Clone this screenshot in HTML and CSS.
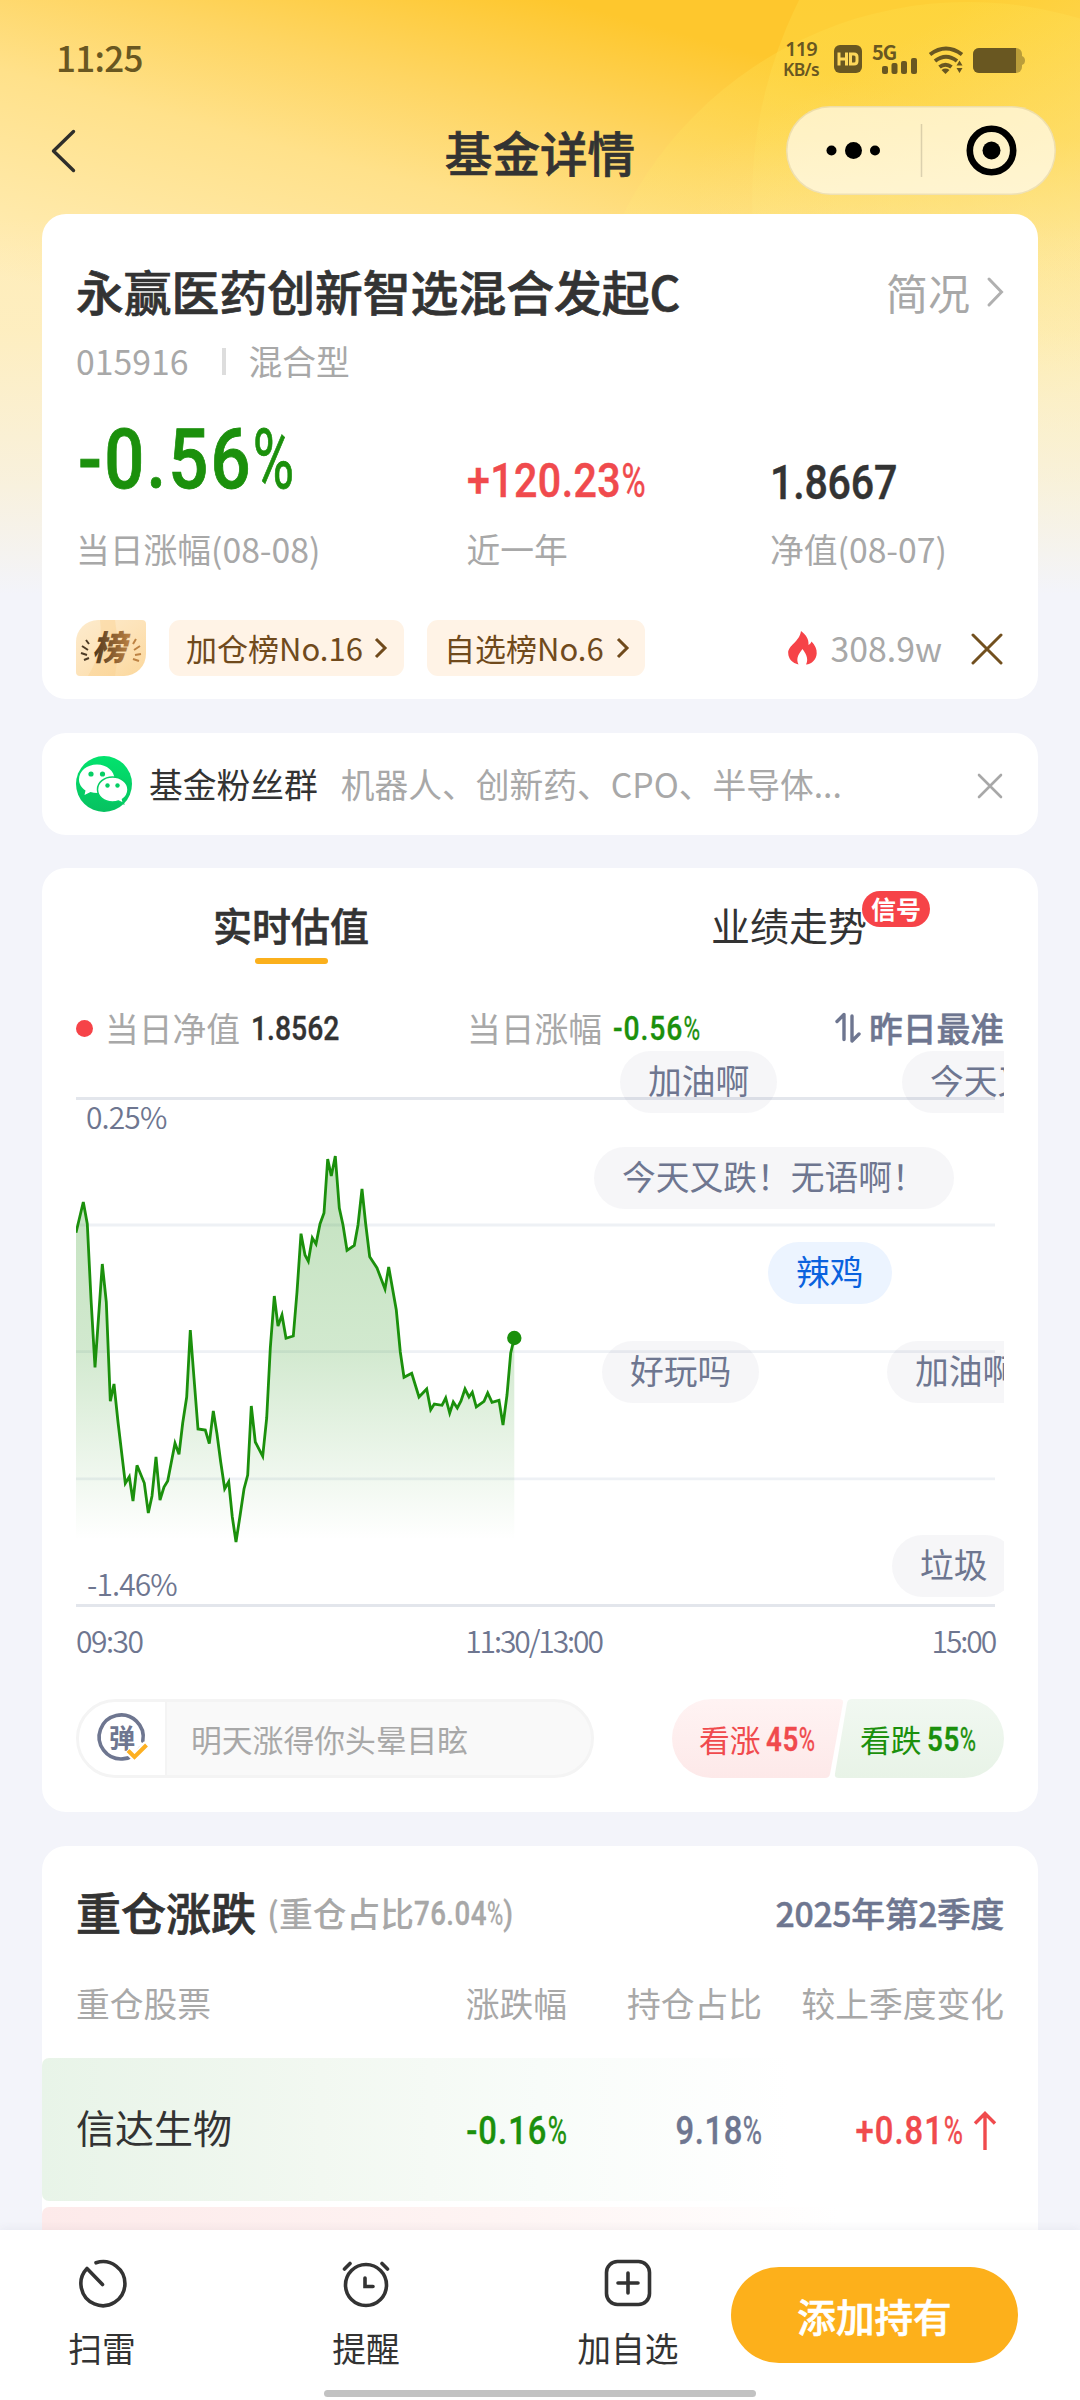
FILE: index.html
```html
<!DOCTYPE html>
<html lang="zh-CN">
<head>
<meta charset="utf-8">
<title>基金详情</title>
<link rel="stylesheet" href="styles.css">
</head>
<body>
<div class="page">
  <svg class="backdrop" width="1080" height="600" viewBox="0 0 1080 600">
    <defs>
      <linearGradient id="sky" gradientUnits="userSpaceOnUse" x1="560" y1="0" x2="450" y2="400">
        <stop offset="0" stop-color="#fec72d"/><stop offset=".28" stop-color="#fed562"/><stop offset=".52" stop-color="#ffe18a"/><stop offset="1" stop-color="#ffedb8"/>
      </linearGradient>
      <linearGradient id="haze" x1="0" y1="0" x2="0" y2="1">
        <stop offset=".36" stop-color="#f3f4fa" stop-opacity="0"/><stop offset=".55" stop-color="#f3f4fa" stop-opacity=".12"/><stop offset=".8" stop-color="#f3f4fa" stop-opacity=".55"/><stop offset=".99" stop-color="#f3f4fa" stop-opacity="1"/>
      </linearGradient>
      <linearGradient id="side" gradientUnits="userSpaceOnUse" x1="0" y1="0" x2="0" y2="400">
        <stop offset="0" stop-color="#ffe04a" stop-opacity=".32"/><stop offset=".35" stop-color="#ffe25e" stop-opacity=".3"/><stop offset=".6" stop-color="#ffe88c" stop-opacity=".3"/><stop offset="1" stop-color="#ffedb0" stop-opacity=".3"/>
      </linearGradient>
      <linearGradient id="corner" gradientUnits="userSpaceOnUse" x1="830" y1="80" x2="1020" y2="420">
        <stop offset="0" stop-color="#ffe99c" stop-opacity="0"/><stop offset="1" stop-color="#ffefb4" stop-opacity=".75"/>
      </linearGradient>
    </defs>
    <rect width="1080" height="600" fill="url(#sky)"/>
    <circle cx="968" cy="388" r="386" fill="url(#side)"/>
    <circle cx="1200" cy="200" r="448" fill="url(#side)"/>
    <path d="M700 0h380v600H700z" fill="url(#corner)"/>
    <rect width="1080" height="600" fill="url(#haze)"/>
  </svg>

  <header class="status">
    <span class="clock">11:25</span>
    <span class="speed"><b>119</b><i>KB/s</i></span>
    <svg class="status-icons" width="192" height="32" viewBox="833 43 192 32">
      <g fill="#695721">
        <rect x="834" y="45" width="28" height="28" rx="6"/>
        <g fill="none" stroke="#fdd75a" stroke-width="3"><path d="M839 52.500v13M846.500 52.500v13M839 59h7.500M850.500 54h3.500q3 0 3 3v4q0 3-3 3h-3.500z"/></g>
        <text x="872" y="59.500" class="five-g">5G</text>
        <rect x="882" y="66" width="6" height="8" rx="2"/><rect x="891.500" y="63" width="6" height="11" rx="2"/><rect x="901" y="61" width="6" height="13" rx="2"/><rect x="911" y="58" width="6" height="16" rx="2"/>
        <g fill="none" stroke="#695721" stroke-width="4"><path d="M930 54.500q16-12 32 0M935 61q11-8.500 22 0M939.500 67q6-4.500 12 0"/></g>
        <path d="M941.500 70q4-2.800 8 0l-4 4zM956.500 65.500l3-5 3 5zM956.500 68l3 5 3-5z"/>
        <rect x="973" y="48" width="49" height="25" rx="6" fill-opacity=".45"/><path d="M979 48h37v25h-37a6 6 0 0 1-6-6V54a6 6 0 0 1 6-6z"/><path d="M1022 56q3 1 3 4.500t-3 4.500z" fill-opacity=".45"/>
      </g>
    </svg>
  </header>

  <nav class="nav">
    <svg class="back" width="30" height="46" viewBox="0 0 30 46"><path d="M25.500 3.500 5.500 23l20 19.500" fill="none" stroke="#2f2e2a" stroke-width="3.400" stroke-linecap="round" stroke-linejoin="round"/></svg>
    <h1>基金详情</h1>
    <div class="capsule">
      <svg width="270" height="89" viewBox="0 0 270 89"><circle cx="45.500" cy="44.500" r="5"/><circle cx="67.500" cy="44.500" r="8.500"/><circle cx="89" cy="44.500" r="5"/><path d="M135.500 18v53" stroke="#000" stroke-opacity=".14" stroke-width="1.500"/><circle cx="205.500" cy="44.500" r="21.700" fill="none" stroke="#000" stroke-width="6.600"/><circle cx="205.500" cy="44.500" r="9"/></svg>
    </div>
  </nav>

  <main>
    <section class="card fund">
      <div class="name-row">
        <h2>永赢医药创新智选混合发起C</h2>
        <a class="brief">简况<svg width="20" height="32" viewBox="0 0 20 32"><path d="M5 3 17.500 16 5 29" fill="none" stroke="#b0b0b0" stroke-width="3" stroke-linecap="round"/></svg></a>
      </div>
      <div class="code-row"><span>015916</span><i></i><span>混合型</span></div>
      <div class="figures">
        <div><div class="value green"><span class="num big">-0.56<s>%</s></span></div><div class="label">当日涨幅(08-08)</div></div>
        <div><div class="value red"><span class="num mid">+120.23<s>%</s></span></div><div class="label">近一年</div></div>
        <div><div class="value"><span class="num mid low">1.8667</span></div><div class="label">净值(08-07)</div></div>
      </div>
      <div class="rank-row">
        <svg class="rank-badge" width="70" height="56" viewBox="0 0 70 56">
          <defs>
            <linearGradient id="gold" x1="0" y1="0" x2="1" y2="1"><stop offset="0" stop-color="#fdebcd"/><stop offset=".5" stop-color="#fde3b9"/><stop offset="1" stop-color="#fbd79b"/></linearGradient>
            <linearGradient id="ink" x1="0" y1="0" x2="1" y2="0"><stop offset="0" stop-color="#4c351c"/><stop offset="1" stop-color="#bd8243"/></linearGradient>
          </defs>
          <path d="M22 0h44a4 4 0 0 1 4 4v30a22 22 0 0 1-22 22H4a4 4 0 0 1-4-4V22A22 22 0 0 1 22 0z" fill="url(#gold)"/>
          <path d="M24 0h15q5 28 0 56H12Q28 30 24 0z" fill="#f9cf8c" fill-opacity=".4"/>
          <g fill="none" stroke="#4c3a25" stroke-width="2"><path d="M10 20l3 4M6 26l6 4M5 33l6 2M8 40l5-2"/></g>
          <g fill="none" stroke="#bd8243" stroke-width="2"><path d="M60 19l-3 5M64 26l-6 4M65 34l-6 1M63 41l-6-2"/></g>
          <text x="16" y="39.500" class="rank-char" fill="url(#ink)">榜</text>
        </svg>
        <a class="chip first">加仓榜No.16<svg width="14" height="22" viewBox="0 0 14 22"><path d="M2 2l9 9-9 9" fill="none" stroke="#704a1c" stroke-width="3"/></svg></a>
        <a class="chip second">自选榜No.6<svg width="14" height="22" viewBox="0 0 14 22"><path d="M2 2l9 9-9 9" fill="none" stroke="#704a1c" stroke-width="3"/></svg></a>
        <span class="heat"><svg width="29" height="34" viewBox="0 0 29 34"><path d="M13 0c5 4 8 8 7.500 14 1.500-.8 2.500-2 3-3.500C27 14 29 18 28.700 22.500 28.300 28.500 24 33 18 33.500c2.500-4.500 1-9.500-3.500-15.500C11 22.500 7.500 27 10.500 33.500 4.500 32 .3 28 .2 22 .2 14 11.500 11 13 0z" fill="#f64348"/></svg>308.9w</span>
        <svg class="close-brown" width="32" height="32" viewBox="0 0 32 32"><path d="M2 2l28 28M30 2 2 30" stroke="#72501f" stroke-width="3" stroke-linecap="round"/></svg>
      </div>
    </section>

    <section class="card fans">
      <svg width="56" height="56" viewBox="0 0 56 56">
        <defs><linearGradient id="wx" x1="0" y1="0" x2="0" y2="1"><stop offset="0" stop-color="#02e36d"/><stop offset="1" stop-color="#07c160"/></linearGradient></defs>
        <circle cx="28" cy="28" r="28" fill="url(#wx)"/>
        <path d="M21 8.500C11 8.500 3 15 3 23.500c0 4.500 2.500 8.500 6.500 11L8.500 39l6-3q3 1 7 1c10 0 17-6.500 17-14S31 8.500 21 8.500z" fill="#fff"/>
        <path d="M36.500 21C28 21 21.500 26.500 21.500 33.500S28 46 36.500 46q3.300 0 6-1l5 2.500-1-4.200c3.500-2.300 5.500-5.800 5.500-9.800C52 26.500 45 21 36.500 21z" fill="#fff" stroke="#05cf64" stroke-width="1.500"/>
        <g fill="#05cf64"><circle cx="15" cy="18" r="2.600"/><circle cx="26.500" cy="18" r="2.600"/><circle cx="31.500" cy="29.500" r="2.200"/><circle cx="41.500" cy="29.500" r="2.200"/></g>
      </svg>
      <strong>基金粉丝群</strong>
      <span>机器人、创新药、CPO、半导体...</span>
      <svg class="close" width="28" height="28" viewBox="0 0 28 28"><path d="M3 3l22 22M25 3 3 25" stroke="#a8a8a8" stroke-width="2.600" stroke-linecap="round"/></svg>
    </section>

    <section class="card trend">
      <div class="tabs">
        <a class="tab active"><span>实时估值</span></a>
        <a class="tab"><span>业绩走势<em>信号</em></span></a>
      </div>
      <div class="legend">
        <div><i class="dot"></i>当日净值<span class="num small">1.8562</span></div>
        <div>当日涨幅<span class="num small pct green">-0.56<s>%</s></span></div>
        <div class="best"><svg width="26" height="32" viewBox="0 0 26 32"><path d="M2 9.500 9 2.500v25M17 4v25l7-7" fill="none" stroke="#6e7690" stroke-width="3.400" stroke-linecap="round" stroke-linejoin="round"/></svg>昨日最准</div>
      </div>
      <div class="chart">
        <svg width="928" height="559" viewBox="0 0 928 559">
          <defs><linearGradient id="fill" gradientUnits="userSpaceOnUse" x1="0" y1="105" x2="0" y2="489"><stop offset="0" stop-color="#1b900c" stop-opacity=".27"/><stop offset=".5" stop-color="#1b900c" stop-opacity=".2"/><stop offset="1" stop-color="#1b900c" stop-opacity="0"/></linearGradient></defs>
          <g stroke="#eef1f5" stroke-width="2.800"><path d="M0 174h919M0 300.600h919M0 427.800h919"/></g>
          <g stroke="#e3e6ec" stroke-width="3"><path d="M0 47.500h919M0 554.500h919"/></g>
          <path fill="url(#fill)" d="M0 181.700 7.300 151 11.300 173 15 248 19 316.300 26.300 213 30.300 251 34.300 350.300 38 333 42 371 49.300 432.300 53.300 425.700 57 450 61 414.300 68.300 432 72.300 462 76 445 80 406 84 449 88 436 91.700 430 99 392.300 103 403.300 106.700 372 110.700 346 114.300 279 118 327 122 378 129.300 379 133.300 392.700 137.300 360 141 383 144.700 411 148.700 437.700 152.700 430.700 156.300 466 160 491 164 465 168 438 171.700 424 175.300 355 179.300 391 186.700 405.300 190.700 367 194.300 297 198.300 245 202 275 206 264 210 287.300 217.300 285 221 241 225 182.700 229 204 232.300 210.300 236.300 187 240 193 244 173 248 162 251.700 108 255.300 125 259.300 105 263.300 157 267 174 271 199.300 278.300 194.300 282 174 286 138 289.700 173 293.700 205.700 301 217 309 238 312.700 216 320.300 259 324.300 301 328 326.300 335.700 322.300 343 346 350.700 338 354.700 358.700 358.300 353 366 354.300 369.700 347 373.700 362 377.300 351 381.300 357 385 350 389 338 393 346 396.300 341.300 400.300 356 408 350.300 411.700 342 416 351.300 423 349.300 427 374 431 344 434.700 302 438.300 287V489H0z"/>
          <path fill="none" stroke="#1b900c" stroke-width="2.800" d="M0 181.700 7.300 151 11.300 173 15 248 19 316.300 26.300 213 30.300 251 34.300 350.300 38 333 42 371 49.300 432.300 53.300 425.700 57 450 61 414.300 68.300 432 72.300 462 76 445 80 406 84 449 88 436 91.700 430 99 392.300 103 403.300 106.700 372 110.700 346 114.300 279 118 327 122 378 129.300 379 133.300 392.700 137.300 360 141 383 144.700 411 148.700 437.700 152.700 430.700 156.300 466 160 491 164 465 168 438 171.700 424 175.300 355 179.300 391 186.700 405.300 190.700 367 194.300 297 198.300 245 202 275 206 264 210 287.300 217.300 285 221 241 225 182.700 229 204 232.300 210.300 236.300 187 240 193 244 173 248 162 251.700 108 255.300 125 259.300 105 263.300 157 267 174 271 199.300 278.300 194.300 282 174 286 138 289.700 173 293.700 205.700 301 217 309 238 312.700 216 320.300 259 324.300 301 328 326.300 335.700 322.300 343 346 350.700 338 354.700 358.700 358.300 353 366 354.300 369.700 347 373.700 362 377.300 351 381.300 357 385 350 389 338 393 346 396.300 341.300 400.300 356 408 350.300 411.700 342 416 351.300 423 349.300 427 374 431 344 434.700 302 438.300 287"/>
          <circle cx="438.300" cy="287" r="7.200" fill="#1b900c"/>
          <text x="10" y="78" class="axis" letter-spacing="-.9">0.25%</text>
          <text x="11" y="545" class="axis" letter-spacing="-.9">-1.46%</text>
        </svg>
        <span class="bullet b1">加油啊</span>
        <span class="bullet b2">今天又跌！无语啊！</span>
        <span class="bullet b3">今天又跌！无语啊！</span>
        <span class="bullet b4">辣鸡</span>
        <span class="bullet b5">好玩吗</span>
        <span class="bullet b6">加油啊</span>
        <span class="bullet b7">垃圾</span>
      </div>
      <div class="times"><span>09:30</span><span>11:30/13:00</span><span>15:00</span></div>
      <div class="vote-row">
        <div class="comment">
          <div class="comment-icon">
            <svg width="56" height="56" viewBox="0 0 56 56"><path d="M47.500 35A22 22 0 1 1 49 28" transform="rotate(8 27 28)" fill="none" stroke="#6e7690" stroke-width="3.600" stroke-linecap="round"/><text x="15" y="37.500" class="dan">弹</text><path d="M33.500 40l7 7L53 34" fill="none" stroke="#fff" stroke-width="8"/><path d="M34 40.500l6.500 6.500L52.500 35" fill="none" stroke="#fdb022" stroke-width="4"/></svg>
          </div>
          <span>明天涨得你头晕目眩</span>
        </div>
        <div class="votes">
          <svg width="332" height="79" viewBox="0 0 332 79">
            <defs><linearGradient id="up" x1="0" y1="0" x2="0" y2="1"><stop offset="0" stop-color="#fff3f3"/><stop offset="1" stop-color="#fde9e9"/></linearGradient><linearGradient id="down" x1="0" y1="0" x2="0" y2="1"><stop offset="0" stop-color="#f1f8f1"/><stop offset="1" stop-color="#e8f3e7"/></linearGradient></defs>
            <path d="M39.500 0H167q4.500 0 4 4l-13 71q-.8 4-5 4H39.500a39.500 39.500 0 0 1 0-79z" fill="url(#up)"/>
            <path d="M180 0h112.500a39.500 39.500 0 0 1 0 79H167q-5 0-4-4.500L175 4q.8-4 5-4z" fill="url(#down)"/>
          </svg>
          <div class="vote red">看涨<span class="num vote-num">45<s>%</s></span></div>
          <div class="vote down green">看跌<span class="num vote-num">55<s>%</s></span></div>
        </div>
      </div>
    </section>

    <section class="card holdings">
      <div class="hold-title"><h3>重仓涨跌</h3><span class="ratio">(重仓占比<span class="num ratio-num">76.04<s>%</s>)</span></span><span class="quarter">2025年第2季度</span></div>
      <div class="cols head"><span>重仓股票</span><span>涨跌幅</span><span>持仓占比</span><span>较上季度变化</span></div>
      <div class="cols stock fall"><span>信达生物</span><span class="green"><b class="num cell pct">-0.16<s>%</s></b></span><span class="slate"><b class="num cell share">9.18<s>%</s></b></span><span class="red delta"><b class="num cell pct">+0.81<s>%</s></b><svg width="26" height="42" viewBox="0 0 26 42"><path d="M13 40V4M3 13.500 13 3.500l10 10" fill="none" stroke="#f04a4d" stroke-width="3.400"/></svg></span></div>
      <div class="cols stock rise"></div>
    </section>
  </main>

  <footer class="bar">
    <a><svg width="52" height="52" viewBox="0 0 52 52"><path d="M20 5.800A22 22 0 1 1 11 11.500L26.500 27.500" fill="none" stroke="#333" stroke-width="3.600" stroke-linecap="round" stroke-linejoin="round"/></svg>扫雷</a>
    <a><svg width="52" height="52" viewBox="0 0 52 52"><g fill="none" stroke="#333" stroke-width="3.600" stroke-linecap="round"><circle cx="26" cy="28" r="20.500"/><path d="M4.500 12 10 6.500M47.500 12 42 6.500M25 21v8.500h8"/></g></svg>提醒</a>
    <a><svg width="52" height="52" viewBox="0 0 52 52"><g fill="none" stroke="#333" stroke-width="3.600" stroke-linecap="round"><rect x="4.500" y="4.500" width="43" height="43" rx="11"/><path d="M26 16v20M16 26h20"/></g></svg>加自选</a>
    <button>添加持有</button>
    <i class="home"></i>
  </footer>
</div>
</body>
</html>
```
FILE: styles.css
```css
* { box-sizing: border-box; margin: 0; padding: 0; }
body {
  font-family: "Noto Sans CJK SC", "Noto Sans", sans-serif;
  font-size: 33.75px;
  color: #333;
  background: #f3f4fa;
}
svg { display: block; flex: none; }
i, em { font-style: normal; }
.page { position: relative; width: 1080px; height: 2400px; overflow: hidden; }
.backdrop { position: absolute; left: 0; top: 0; }

.green { color: #1b900c; }
.red { color: #f04a4d; }
.slate { color: #6e7690; }

/* condensed figures */
.num {
  display: inline-block;
  font-family: Roboto, sans-serif;
  font-weight: 500;
  white-space: nowrap;
  transform: scaleX(.84);
  transform-origin: left center;
  -webkit-text-stroke: .01em;
}
.num s {
  display: inline-block;
  width: .59em;
  text-decoration: none;
  font-weight: 400;
  letter-spacing: 0;
  transform: scaleX(.8);
  transform-origin: left center;
}
.pct { letter-spacing: .032em; }

.status {
  position: relative;
  display: flex;
  align-items: center;
  height: 88px;
  padding: 30px 55px 0 56px;
  color: #695721;
}
.clock { font-size: 35px; font-weight: 500; line-height: 52px; margin-top: -4px; letter-spacing: -.7px; }
.speed { margin-left: auto; width: 40px; margin-right: 12px; text-align: center; font-family: "Noto Sans", sans-serif; white-space: nowrap; }
.speed b { display: block; font-size: 20px; font-weight: 600; line-height: 21px; letter-spacing: -.9px; }
.speed i { display: block; font-size: 17.5px; font-weight: 600; line-height: 21px; letter-spacing: -.6px; }
.five-g { font: 700 20px "Noto Sans CJK SC", sans-serif; letter-spacing: -1px; }

.nav { position: relative; display: flex; align-items: center; justify-content: center; height: 126px; }
.nav h1 { font-size: 47.6px; font-weight: 500; line-height: 60px; padding-top: 1px; -webkit-text-stroke: .7px; }
.back { position: absolute; left: 48px; top: 40px; }
.capsule {
  position: absolute; left: 786px; top: 18px;
  width: 270px; height: 89px;
  border-radius: 45px;
  background: rgba(255, 255, 255, .65);
  box-shadow: inset 0 0 0 1.5px rgba(120, 90, 0, .13);
}

main { position: relative; padding: 0 42px; }
.card { background: #fff; border-radius: 24px; padding: 0 34px; }

.fund { height: 485px; padding-top: 46px; }
.name-row { display: flex; justify-content: space-between; align-items: center; height: 60px; }
.name-row h2 { font-size: 47.8px; font-weight: 500; line-height: 60px; padding-top: 2px; white-space: nowrap; -webkit-text-stroke: .7px; }
.brief { display: flex; align-items: center; gap: 14px; font-size: 42px; line-height: 60px; color: #a8a8a8; padding-top: 4px; }
.code-row { display: flex; align-items: center; height: 40px; margin-top: 21px; line-height: 40px; color: #a8a8a8; }
.code-row i { width: 4px; height: 27px; margin: 0 22px 0 34px; background: #ddd; }
.figures { display: grid; grid-template-columns: 390.500px 303.500px 1fr; margin-top: 39px; }
.value { display: flex; align-items: flex-end; height: 80px; }
.big { font-size: 84px; line-height: 80px; margin-left: 2px; letter-spacing: .031em; }
.mid { font-size: 49px; line-height: 38px; letter-spacing: .01em; }
.low { position: relative; top: 2px; letter-spacing: -.005em; }
.label { margin-top: 29px; line-height: 40px; color: #a8a8a8; }
.rank-row { display: flex; align-items: center; height: 56px; margin-top: 51px; }
.rank-char { font: italic 900 34px "Noto Sans CJK SC", sans-serif; }
.chip {
  display: flex; align-items: center; justify-content: space-between;
  height: 56px; border-radius: 11px;
  background: #fff3e6; color: #704a1c;
  font-size: 31px; line-height: 54px;
  margin-left: 23px;
}
.first { width: 235px; padding: 0 16px 0 17px; }
.second { width: 218px; padding: 0 15px 0 17px; }
.heat { display: flex; align-items: center; gap: 14px; margin-left: auto; color: #a8a8a8; line-height: 54px; }
.close-brown { margin-left: 29px; margin-top: 1px; margin-right: 1px; }

.fans { display: flex; align-items: center; height: 102px; margin-top: 34px; line-height: 60px; }
.fans strong { font-weight: 400; margin-left: 17px; }
.fans span { margin-left: 23px; color: #a8a8a8; }
.close { margin-left: auto; margin-top: 4px; }

.trend { height: 944px; margin-top: 33px; }
.tabs { display: grid; grid-template-columns: 1fr 1fr; margin: 0 -34px; padding-top: 27px; height: 96px; font-size: 39px; line-height: 58px; text-align: center; }
.tab span { position: relative; display: inline-block; }
.active { font-weight: 500; -webkit-text-stroke: .6px; }
.active::after { content: ""; display: block; width: 73px; height: 6px; margin: 5px auto 0; border-radius: 3px; background: #fbb01c; }
.tab em {
  position: absolute; left: 151px; top: -4px;
  width: 68px; height: 36px; border-radius: 18px;
  background: #f64348; color: #fff;
  font-size: 25px; font-weight: 700; line-height: 34px;
}
.legend { display: grid; grid-template-columns: 391px 300px 1fr; margin-top: 44px; height: 40px; line-height: 40px; color: #a8a8a8; }
.legend > div { display: flex; align-items: center; white-space: nowrap; }
.dot { width: 17px; height: 17px; margin-right: 12px; border-radius: 50%; background: #f64348; }
.small { font-size: 33.75px; margin-left: 11px; }
.legend .num { position: relative; top: 1px; }
.legend .num:not(.green) { color: #333; }
.legend .best { justify-content: flex-end; gap: 8px; color: #6e7690; font-weight: 500; -webkit-text-stroke: .5px; }

.chart { position: relative; height: 559px; margin-top: 3px; overflow: hidden; }
.axis { font: 350 30px "Noto Sans CJK SC", sans-serif; fill: #6e7690; }
.bullet {
  position: absolute;
  height: 62px; padding: 0 28px;
  border-radius: 31px;
  background: rgba(100, 105, 135, .06);
  color: #6e7690;
  line-height: 57px;
  white-space: nowrap;
}
.b1 { left: 544px; top: 0; }
.b2 { left: 826px; top: 0; }
.b3 { left: 518px; top: 96px; }
.b4 { left: 692px; top: 191px; background: #ecf4ff; color: #0a62de; }
.b5 { left: 526px; top: 290px; }
.b6 { left: 811px; top: 290px; }
.b7 { left: 816px; top: 484px; }
.times { display: flex; justify-content: space-between; margin-top: 10px; padding-right: 9px; font-size: 30px; line-height: 40px; font-weight: 350; color: #6e7690; }
.times span:nth-child(1) { letter-spacing: -1.5px; }
.times span:nth-child(2) { letter-spacing: -2.1px; margin-right: 7px; }
.times span:nth-child(3) { letter-spacing: -2.1px; }

.vote-row { display: flex; justify-content: space-between; margin-top: 39px; height: 79px; }
.comment { display: flex; align-items: center; width: 518px; border: 3px solid #f4f4f4; border-radius: 40px; background: #f9f9f9; overflow: hidden; font-size: 30.8px; color: #a8a8a8; line-height: 73px; }
.comment-icon { width: 88px; height: 73px; padding: 8px 0 0 15px; margin-right: 24px; background: #fff; border-right: 2px solid #f4f4f4; }
.dan { font: 700 26px "Noto Sans CJK SC", sans-serif; fill: #6e7690; }
.votes { display: grid; grid-template-columns: 161px 171px; }
.votes svg { grid-area: 1 / 1 / 2 / 3; }
.vote { grid-area: 1 / 1; display: flex; align-items: center; padding-left: 27px; font-size: 30.8px; line-height: 78px; z-index: 1; }
.down { grid-column: 2; }
.vote-num { font-size: 33px; margin-left: 5px; font-weight: 600; letter-spacing: .025em; position: relative; top: 1px; }

.holdings { height: 700px; margin-top: 34px; padding-top: 35px; }
.hold-title { display: flex; align-items: center; height: 60px; line-height: 60px; white-space: nowrap; }
.hold-title h3 { font-size: 45px; font-weight: 500; padding-top: 1px; -webkit-text-stroke: .7px; }
.ratio { display: flex; margin: 3px 0 0 11px; color: #a8a8a8; font-weight: 500; }
.ratio-num { font-size: 33px; letter-spacing: .015em; position: relative; top: 1px; }
.quarter { margin: 3px 0 0 auto; color: #6e7690; font-weight: 500; letter-spacing: -.3px; -webkit-text-stroke: .5px; }
.cols { display: grid; grid-template-columns: 300px 191px 195px 242px; align-items: center; margin: 0 -34px; padding: 0 34px; white-space: nowrap; }
.cols > span:not(:first-child) { text-align: right; }
.head { height: 40px; margin-top: 42px; line-height: 40px; color: #a8a8a8; }
.stock { height: 143px; border-radius: 7px; font-size: 39px; }
.stock > span:first-child { position: relative; top: -4px; }
.stock > span:not(:first-child) { display: flex; align-items: center; justify-content: flex-end; height: 44px; padding-top: 3px; }
.cell { font-size: 39px; line-height: 44px; transform-origin: right center; }
.share { letter-spacing: .02em; }
.fall { margin-top: 35px; background: linear-gradient(90deg, #e8f4e8, #f2f8f1 28%, #f8fcf9 50%, #fff 75%); }
.rise { margin-top: 6px; background: linear-gradient(90deg, #fdeaea, #fef4f3 45%, #fff 80%); }
.stock > .delta { gap: 9px; padding-right: 6px; }

.bar {
  position: absolute; left: 0; top: 2230px;
  display: grid; grid-template-columns: 204px 324px 200px 1fr;
  width: 1080px; height: 170px;
  background: #fff;
  box-shadow: 0 -2px 8px rgba(60, 60, 100, .06);
}
.bar a { display: flex; flex-direction: column; align-items: center; padding-top: 27px; line-height: 40px; font-size: 33.75px; gap: 19px; }
.bar button {
  width: 287px; height: 96px; margin: 37px 0 0 3px; padding-bottom: 1px;
  border: 0; border-radius: 48px;
  background: #fdb01b; color: #fff;
  font: 500 38.6px/94px "Noto Sans CJK SC", sans-serif;
  -webkit-text-stroke: .6px;
}
.home { position: absolute; left: 324px; top: 160px; width: 432px; height: 7px; border-radius: 4px; background: #c2c2c2; }
```
